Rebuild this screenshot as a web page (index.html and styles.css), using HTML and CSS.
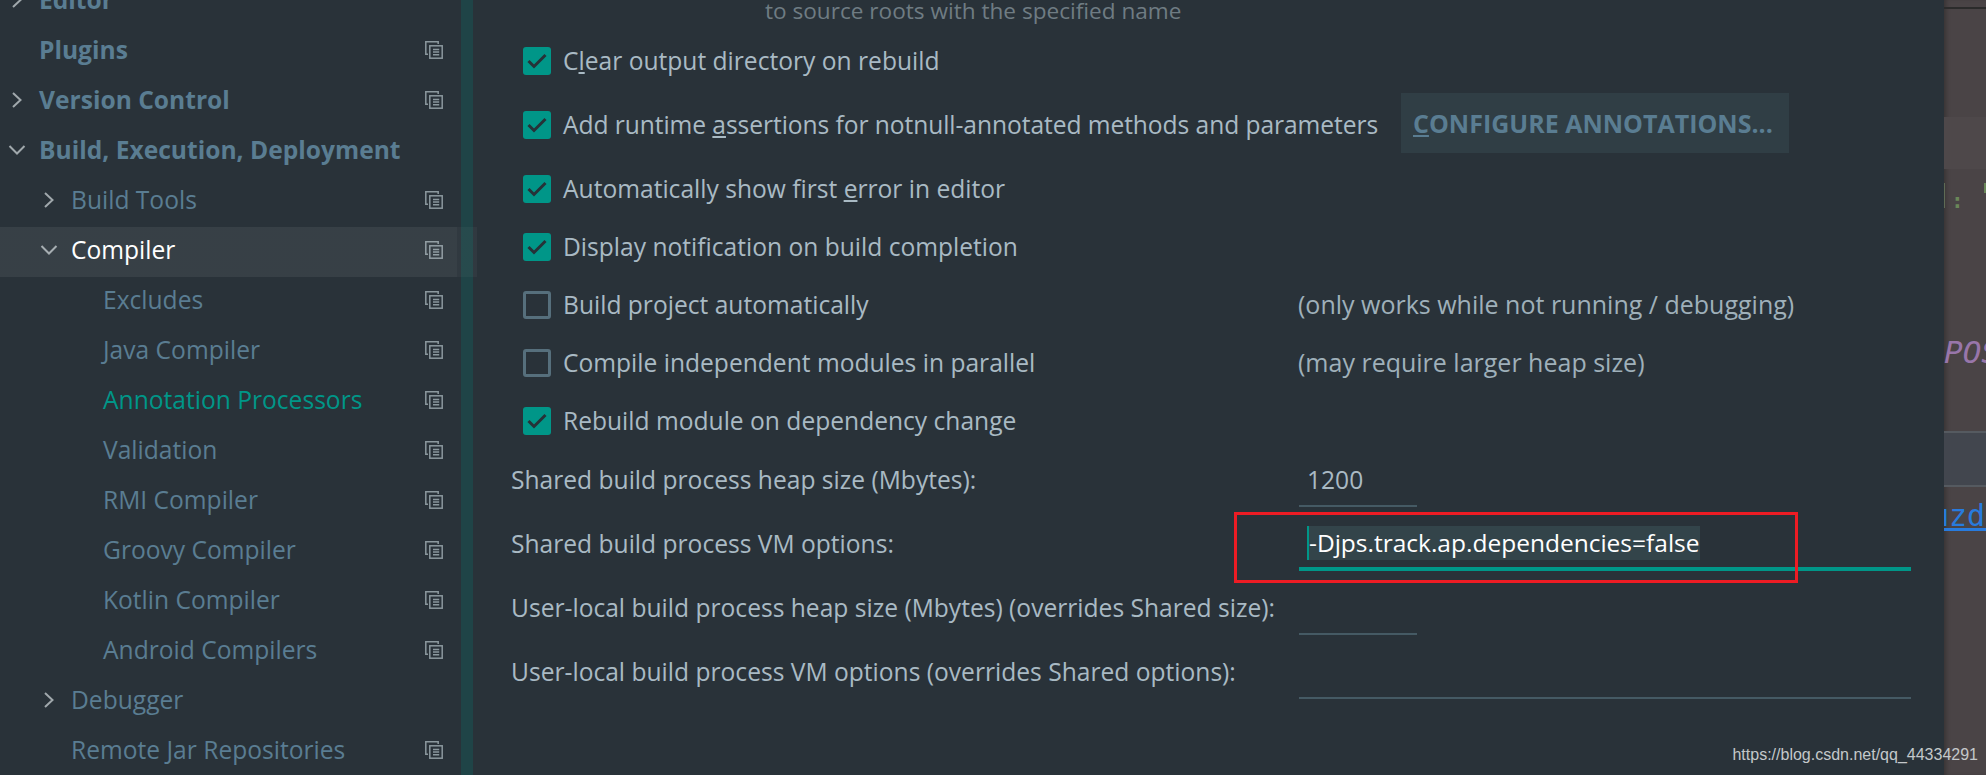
FILE: index.html
```html
<!DOCTYPE html>
<html lang="en">
<head>
    <meta charset="UTF-8">
    <meta name="viewport" content="width=device-width, initial-scale=1.0">
    <title>Settings - Compiler</title>
    <link rel="stylesheet" href="styles.css">
</head>
<body>
    <svg class="defs" width="0" height="0">
        <symbol id="copy" viewBox="0 0 18 18">
            <path d="M3 13.2H.8V.8h12.4V3" fill="none" stroke="currentColor" stroke-width="1.5"/>
            <rect x="4.8" y="4.8" width="12.4" height="12.4" fill="none" stroke="currentColor" stroke-width="1.5"/>
            <path d="M8 8.5h6.2M8 11h6.2M8 13.8h6.2" fill="none" stroke="currentColor" stroke-width="1.4"/>
        </symbol>
        <symbol id="right" viewBox="0 0 12 18">
            <path d="M2 2l7.5 7L2 16" fill="none" stroke="currentColor" stroke-width="2"/>
        </symbol>
        <symbol id="down" viewBox="0 0 18 12">
            <path d="M1.5 2L9 9.5 16.500 2" fill="none" stroke="currentColor" stroke-width="2"/>
        </symbol>
        <symbol id="tick" viewBox="0 0 28 28">
            <path d="M5.500 14l5.500 5.500L22.500 8" fill="none" stroke="#263238" stroke-width="3"/>
        </symbol>
    </svg>

    <div class="window">
        <nav class="sidebar">
            <div class="node bold"><span class="twist"><svg class="arrow-r"><use href="#right"/></svg></span>Editor</div>
            <div class="node bold"><span class="twist"></span>Plugins<svg class="copy"><use href="#copy"/></svg></div>
            <div class="node bold"><span class="twist"><svg class="arrow-r"><use href="#right"/></svg></span>Version Control<svg class="copy"><use href="#copy"/></svg></div>
            <div class="node bold"><span class="twist"><svg class="arrow-d"><use href="#down"/></svg></span>Build, Execution, Deployment</div>
            <div class="node lvl1"><span class="twist"><svg class="arrow-r"><use href="#right"/></svg></span>Build Tools<svg class="copy"><use href="#copy"/></svg></div>
            <div class="node lvl1 selected"><span class="twist"><svg class="arrow-d"><use href="#down"/></svg></span>Compiler<svg class="copy"><use href="#copy"/></svg></div>
            <div class="node lvl2"><span class="twist"></span>Excludes<svg class="copy"><use href="#copy"/></svg></div>
            <div class="node lvl2"><span class="twist"></span>Java Compiler<svg class="copy"><use href="#copy"/></svg></div>
            <div class="node lvl2 active"><span class="twist"></span>Annotation Processors<svg class="copy"><use href="#copy"/></svg></div>
            <div class="node lvl2"><span class="twist"></span>Validation<svg class="copy"><use href="#copy"/></svg></div>
            <div class="node lvl2"><span class="twist"></span>RMI Compiler<svg class="copy"><use href="#copy"/></svg></div>
            <div class="node lvl2"><span class="twist"></span>Groovy Compiler<svg class="copy"><use href="#copy"/></svg></div>
            <div class="node lvl2"><span class="twist"></span>Kotlin Compiler<svg class="copy"><use href="#copy"/></svg></div>
            <div class="node lvl2"><span class="twist"></span>Android Compilers<svg class="copy"><use href="#copy"/></svg></div>
            <div class="node lvl1"><span class="twist"><svg class="arrow-r"><use href="#right"/></svg></span>Debugger</div>
            <div class="node lvl1"><span class="twist"></span>Remote Jar Repositories<svg class="copy"><use href="#copy"/></svg></div>
        </nav>
        <div class="strip"></div>

        <main class="settings">
            <div class="hint">to source roots with the specified name</div>

            <div class="check tall">
                <span class="box on"><svg class="tick"><use href="#tick"/></svg></span>
                <span class="text">C<u>l</u>ear output directory on rebuild</span>
            </div>
            <div class="check tall">
                <span class="box on"><svg class="tick"><use href="#tick"/></svg></span>
                <span class="text assertions">Add runtime <u>a</u>ssertions for notnull-annotated methods and parameters</span>
                <span class="btn"><span><u>C</u>ONFIGURE ANNOTATIONS...</span></span>
            </div>
            <div class="check first-short">
                <span class="box on"><svg class="tick"><use href="#tick"/></svg></span>
                <span class="text">Automatically show first <u>e</u>rror in editor</span>
            </div>
            <div class="check">
                <span class="box on"><svg class="tick"><use href="#tick"/></svg></span>
                <span class="text">Display notification on build completion</span>
            </div>
            <div class="check">
                <span class="box"></span>
                <span class="text check-label">Build project automatically</span>
                <span class="text note">(only works while not running / debugging)</span>
            </div>
            <div class="check">
                <span class="box"></span>
                <span class="text check-label">Compile independent modules in parallel</span>
                <span class="text note">(may require larger heap size)</span>
            </div>
            <div class="check">
                <span class="box on"><svg class="tick"><use href="#tick"/></svg></span>
                <span class="text">Rebuild module on dependency change</span>
            </div>

            <div class="form">
                <div class="form-row">
                    <label>Shared build process heap size (Mbytes):</label>
                    <div class="field short">1200</div>
                </div>
                <div class="form-row">
                    <label>Shared build process VM options:</label>
                    <div class="field long focused"><span class="selection">-Djps.track.ap.dependencies=false</span></div>
                </div>
                <div class="form-row">
                    <label>User-local build process heap size (Mbytes) (overrides Shared size):</label>
                    <div class="field short"></div>
                </div>
                <div class="form-row">
                    <label>User-local build process VM options (overrides Shared options):</label>
                    <div class="field long"></div>
                </div>
            </div>

            <div class="red-box"></div>
        </main>

        <aside class="editor">
            <div class="ed-top"></div>
            <div class="ed-line"></div>
            <div class="ed-band"></div>
            <div class="ed-gutter">:</div>
            <div class="ed-code">POS</div>
            <div class="ed-current"></div>
            <div class="ed-link">uzd</div>
        </aside>
    </div>

    <div class="watermark">https://blog.csdn.net/qq_44334291</div>
</body>
</html>
```

FILE: styles.css
```css
html, body {
    margin: 0;
    height: 100%;
    overflow: hidden;
}

body {
    background: #293239;
    font-family: "Open Sans", "Noto Sans", sans-serif;
    font-size: 24.6px;
}

.defs {
    position: absolute;
}

.window {
    display: flex;
    height: 775px;
}

/* tree on the left */
.sidebar {
    width: 461px;
    flex: none;
    margin-top: -25px;
    color: #5a7d92;
}

.node {
    display: flex;
    align-items: center;
    width: 461px;
    height: 50px;
    padding-left: 1px;
    padding-bottom: 2px;
    box-sizing: border-box;
    white-space: nowrap;
}

.node.bold {
    font-weight: 700;
}

.lvl1 {
    padding-left: 33px;
}

.lvl2 {
    padding-left: 65px;
}

.twist {
    display: flex;
    justify-content: center;
    align-items: center;
    width: 32px;
    margin-top: 2px;
    margin-right: 6px;
    flex: none;
    color: #a0a8ac;
}

.arrow-r {
    width: 12px;
    height: 18px;
}

.arrow-d {
    width: 18px;
    height: 12px;
}

.copy {
    width: 18px;
    height: 18px;
    margin-top: 2px;
    margin-left: auto;
    margin-right: 18px;
    color: #8b989e;
    flex: none;
}

.selected {
    position: relative;
    z-index: 1;
    width: 477px;
    padding-right: 16px;
    color: #fff;
}

/* the highlight sits 2px lower than the row text */
.selected::before {
    content: "";
    position: absolute;
    left: 0;
    top: 2px;
    width: 100%;
    height: 50px;
    background: linear-gradient(90deg, rgba(255,255,255,0.065) 457px, rgba(255,255,255,0.035) 457px);
}

.active {
    color: #009688;
}

.strip {
    width: 12px;
    flex: none;
    background: #1f4447;
}

/* settings pane */
.settings {
    position: relative;
    width: 1471px;
    flex: none;
    padding-left: 50px;
    box-sizing: border-box;
    color: #a9bac4;
}

.hint {
    height: 29px;
    padding-left: 242px;
    line-height: 22px;
    font-size: 22.6px;
    color: #6f7c83;
}

.check {
    display: flex;
    align-items: center;
    height: 58px;
    white-space: nowrap;
}

.check.tall {
    height: 64px;
}

.check.first-short {
    margin-top: 3px;
}

.text {
    margin-bottom: 2px;
}

.assertions {
    width: 814px;
    flex: none;
    letter-spacing: -0.07px;
}

.box {
    width: 28px;
    height: 28px;
    margin-right: 12px;
    flex: none;
    border: 3px solid #566f7c;
    border-radius: 3px;
    box-sizing: border-box;
}

.box.on {
    background: #009688;
    border: 0;
}

.tick {
    display: block;
    width: 28px;
    height: 28px;
}

.check-label {
    width: 735px;
    flex: none;
}

.note {
    color: #9fb0ba;
    font-size: 25px;
}

.btn {
    display: flex;
    align-items: center;
    height: 60px;
    margin-left: 24px;
    margin-bottom: 4px;
    padding: 0 16px 0 12px;
    background: #303e45;
    color: #5a7d92;
    font-size: 25px;
    font-weight: 700;
}

.form {
    margin-top: 5px;
    margin-left: -12px;
}

.form-row {
    display: flex;
    align-items: flex-end;
    margin-bottom: 12px;
    white-space: nowrap;
}

.form-row label {
    width: 788px;
    flex: none;
    line-height: 50px;
    margin-bottom: 2px;
}

.field {
    height: 52px;
    box-sizing: border-box;
    border-bottom: 2px solid #455a64;
    line-height: 50px;
    padding-left: 8px;
}

.field.short {
    width: 118px;
}

.field.long {
    width: 612px;
}

.field.focused {
    border-bottom: 4px solid #009688;
    line-height: 48px;
}

.selection {
    display: inline-block;
    height: 34px;
    line-height: 34px;
    border-left: 2px solid #009688;
    background: #33444a;
    color: #fff;
    font-size: 24.5px;
}

.red-box {
    position: absolute;
    left: 761px;
    top: 512px;
    width: 564px;
    height: 71px;
    border: 3px solid #ed1c24;
    box-sizing: border-box;
}

/* bit of the editor behind the dialog */
.editor {
    flex: 1;
    background: #4a4446;
    box-shadow: inset 4px 0 4px -2px rgba(0,0,0,0.25);
    overflow: hidden;
}

.ed-top {
    height: 7px;
}

.ed-line {
    height: 2px;
    background: #2b2b2b;
}

.ed-band {
    height: 52px;
    margin-top: 108px;
    background: #4e484a;
}

.ed-gutter {
    height: 40px;
    margin-top: 12px;
    padding-left: 7px;
    line-height: 40px;
    color: #6a8759;
    font-family: "DejaVu Sans Mono", monospace;
    font-size: 21px;
    font-weight: 700;
    background:
        linear-gradient(#5f6b55, #5f6b55) 0 2px / 1px 25px no-repeat,
        linear-gradient(#6a8759, #6a8759) 100% 2px / 2px 10px no-repeat;
}

.ed-code {
    height: 40px;
    margin-top: 111px;
    line-height: 40px;
    font-family: "DejaVu Sans Mono", monospace;
    font-size: 31px;
    font-style: italic;
    color: #9876aa;
    white-space: nowrap;
}

.ed-current {
    height: 52px;
    margin-top: 59px;
    border-top: 2px solid #555a60;
    border-bottom: 2px solid #555a60;
    background: #42464e;
}

.ed-link {
    width: 80px;
    height: 35px;
    margin-left: -13px;
    padding-top: 6px;
    line-height: 46px;
    font-family: "DejaVu Sans Mono", monospace;
    font-size: 30px;
    color: #287bde;
    border-bottom: 3px solid #287bde;
}

.watermark {
    position: absolute;
    right: 8px;
    bottom: 11px;
    font-family: "Liberation Sans", Arial, sans-serif;
    font-size: 16px;
    color: #c4c8ca;
}
```
